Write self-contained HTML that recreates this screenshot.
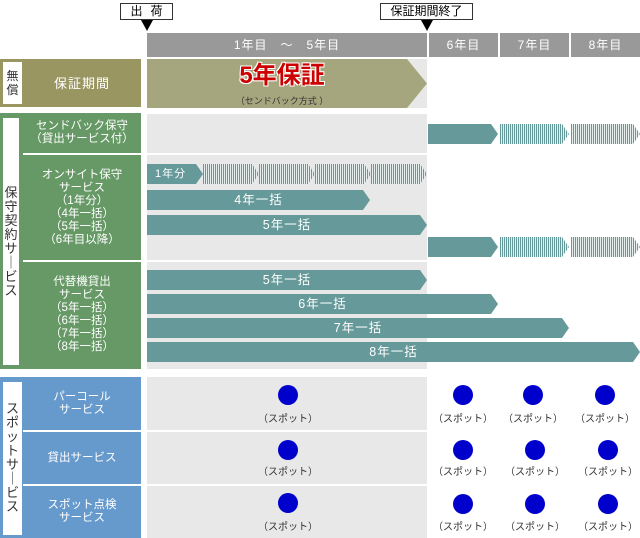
<!DOCTYPE html>
<html><head><meta charset="utf-8"><style>
*{margin:0;padding:0;box-sizing:border-box}
body{width:640px;height:538px;background:#fff;position:relative;overflow:hidden;font-family:"Liberation Sans","Noto Sans CJK JP",sans-serif;font-size:12px}
div{position:absolute}
.hd{background:#999;color:#fff;top:33px;height:24px;line-height:24px;text-align:center;font-size:12px;letter-spacing:1px}
.grey{background:#e8e8e8}
.lab{color:#fff;text-align:center;font-size:11.5px;line-height:13px;display:flex;align-items:center;justify-content:center}
.ar{background:#669999;color:#fff;clip-path:polygon(0 0,calc(100% - 7px) 0,100% 50%,calc(100% - 7px) 100%,0 100%);text-align:center;font-size:12.5px;height:20px;line-height:20px;letter-spacing:1px}
.st{background:linear-gradient(90deg,#669999 50%,#e6eeee 50%);background-size:2px 100%;clip-path:polygon(0 0,calc(100% - 7px) 0,100% 50%,calc(100% - 7px) 100%,0 100%);height:20px}
.dot{width:20px;height:20px;border-radius:50%;background:#0000cc}
.sp{font-size:10px;color:#333;width:70px;text-align:center}
.vt{background:#fff;color:#333;font-size:12px;line-height:14px;text-align:center}
</style></head><body>
<div style="left:120px;top:3px;width:53px;height:17px;border:1px solid #333;text-align:center;line-height:15px;font-size:12px;letter-spacing:8px;padding-left:8px">出荷</div>
<div style="left:141px;top:20px;width:0;height:0;border-left:6px solid transparent;border-right:6px solid transparent;border-top:11px solid #000"></div>
<div style="left:380px;top:3px;width:93px;height:17px;border:1px solid #333;text-align:center;line-height:15px;font-size:12px">保証期間終了</div>
<div style="left:421px;top:20px;width:0;height:0;border-left:6px solid transparent;border-right:6px solid transparent;border-top:11px solid #000"></div>

<div class="hd" style="left:147px;width:280px">1年目　～　5年目</div>
<div class="hd" style="left:429px;width:69px">6年目</div>
<div class="hd" style="left:500px;width:69px">7年目</div>
<div class="hd" style="left:571px;width:69px">8年目</div>

<!-- 無償 -->
<div style="left:0;top:59px;width:141px;height:48px;background:#9a9662"></div>
<div class="vt" style="left:3px;top:62px;width:19px;height:42px;padding-top:7px">無<br>償</div>
<div class="lab" style="left:23px;top:59px;width:118px;height:48px;font-size:13px;letter-spacing:1px">保証期間</div>
<div class="grey" style="left:147px;top:59px;width:280px;height:49px"></div>
<div style="left:147px;top:59px;width:280px;height:49px;background:#a6a67e;clip-path:polygon(0 0,260px 0,100% 50%,260px 100%,0 100%)"></div>
<div style="left:147px;top:62px;width:270px;text-align:center;color:#cc0000;font-size:24px;font-weight:bold;line-height:28px;text-shadow:0 0 1px #fff,1px 1px 0 #fff,-1px -1px 0 #fff,1px -1px 0 #fff,-1px 1px 0 #fff">5年保証</div>
<div style="left:147px;top:94px;width:270px;text-align:center;color:#333;font-size:9px">（センドバック方式 ）</div>

<!-- 保守 -->
<div style="left:0;top:113px;width:141px;height:256px;background:#669966"></div>
<div class="vt" style="left:3px;top:118px;width:16px;height:247px;padding-top:68px;font-size:13px;line-height:14px">保<br>守<br>契<br>約<br>サ<br>｜<br>ビ<br>ス</div>
<div style="left:23px;top:153px;width:118px;height:2px;background:#fff"></div>
<div style="left:23px;top:260px;width:118px;height:2px;background:#fff"></div>
<div class="lab" style="left:23px;top:113px;width:118px;height:40px">センドバック保守<br>（貸出サービス付）</div>
<div class="lab" style="left:23px;top:155px;width:118px;height:105px">オンサイト保守<br>サービス<br>（1年分）<br>（4年一括）<br>（5年一括）<br>（6年目以降）</div>
<div class="lab" style="left:23px;top:262px;width:118px;height:106px">代替機貸出<br>サービス<br>（5年一括）<br>（6年一括）<br>（7年一括）<br>（8年一括）</div>
<div class="grey" style="left:147px;top:114px;width:280px;height:39px"></div>
<div class="grey" style="left:147px;top:155px;width:280px;height:105px"></div>
<div class="grey" style="left:147px;top:262px;width:280px;height:107px"></div>

<div class="ar" style="left:428px;top:124px;width:70px"></div>
<div class="st" style="left:500px;top:124px;width:69px"></div>
<div class="st" style="left:571px;top:124px;width:69px"></div>

<div class="ar" style="left:147px;top:164px;width:56px;text-align:left;padding-left:8px;font-size:11px">1年分</div>
<div class="st" style="left:203px;top:164px;width:56px"></div>
<div class="st" style="left:259px;top:164px;width:56px"></div>
<div class="st" style="left:315px;top:164px;width:56px"></div>
<div class="st" style="left:371px;top:164px;width:56px"></div>
<div class="ar" style="left:147px;top:190px;width:223px">4年一括</div>
<div class="ar" style="left:147px;top:215px;width:280px">5年一括</div>
<div class="ar" style="left:428px;top:237px;width:70px"></div>
<div class="st" style="left:500px;top:237px;width:69px"></div>
<div class="st" style="left:571px;top:237px;width:69px"></div>

<div class="ar" style="left:147px;top:270px;width:280px">5年一括</div>
<div class="ar" style="left:147px;top:294px;width:351px">6年一括</div>
<div class="ar" style="left:147px;top:318px;width:422px">7年一括</div>
<div class="ar" style="left:147px;top:342px;width:493px">8年一括</div>

<!-- スポット -->
<div style="left:0;top:377px;width:141px;height:161px;background:#6699cc"></div>
<div class="vt" style="left:3px;top:382px;width:19px;height:153px;padding-top:20px;font-size:13px;line-height:14px">ス<br>ポ<br>ッ<br>ト<br>サ<br>｜<br>ビ<br>ス</div>
<div style="left:23px;top:430px;width:118px;height:2px;background:#fff"></div>
<div style="left:23px;top:484px;width:118px;height:2px;background:#fff"></div>
<div class="lab" style="left:23px;top:377px;width:118px;height:53px">パーコール<br>サービス</div>
<div class="lab" style="left:23px;top:432px;width:118px;height:52px">貸出サービス</div>
<div class="lab" style="left:23px;top:486px;width:118px;height:52px">スポット点検<br>サービス</div>
<div class="grey" style="left:147px;top:377px;width:280px;height:53px"></div>
<div class="grey" style="left:147px;top:432px;width:280px;height:52px"></div>
<div class="grey" style="left:147px;top:486px;width:280px;height:52px"></div>

<div class="dot" style="left:278px;top:385px"></div><div class="sp" style="left:253px;top:410px">（スポット）</div>
<div class="dot" style="left:453px;top:385px"></div><div class="sp" style="left:428px;top:410px">（スポット）</div>
<div class="dot" style="left:523px;top:385px"></div><div class="sp" style="left:498px;top:410px">（スポット）</div>
<div class="dot" style="left:595px;top:385px"></div><div class="sp" style="left:570px;top:410px">（スポット）</div>

<div class="dot" style="left:278px;top:440px"></div><div class="sp" style="left:253px;top:463px">（スポット）</div>
<div class="dot" style="left:453px;top:440px"></div><div class="sp" style="left:428px;top:463px">（スポット）</div>
<div class="dot" style="left:525px;top:440px"></div><div class="sp" style="left:500px;top:463px">（スポット）</div>
<div class="dot" style="left:598px;top:440px"></div><div class="sp" style="left:573px;top:463px">（スポット）</div>

<div class="dot" style="left:278px;top:493px"></div><div class="sp" style="left:253px;top:518px">（スポット）</div>
<div class="dot" style="left:453px;top:494px"></div><div class="sp" style="left:428px;top:518px">（スポット）</div>
<div class="dot" style="left:525px;top:494px"></div><div class="sp" style="left:500px;top:518px">（スポット）</div>
<div class="dot" style="left:598px;top:494px"></div><div class="sp" style="left:573px;top:518px">（スポット）</div>
</body></html>
